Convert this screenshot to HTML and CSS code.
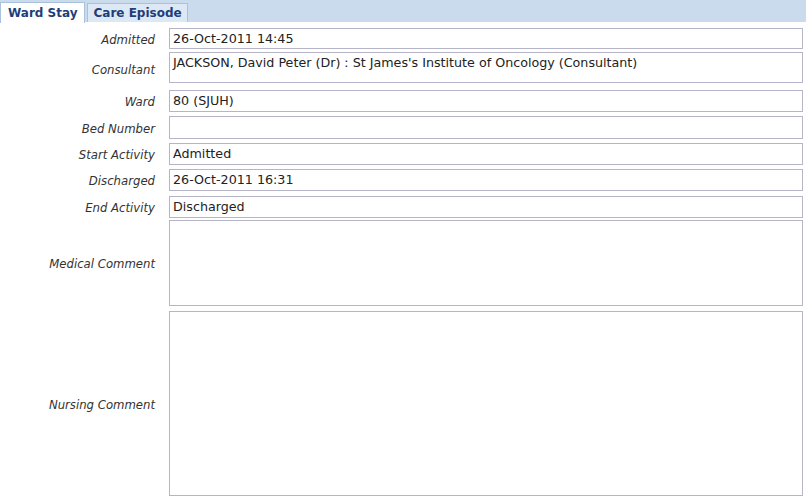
FILE: index.html
```html
<!DOCTYPE html>
<html>
<head>
<meta charset="utf-8">
<link rel="stylesheet" href="styles.css">
</head>
<body>
<div class="tabbar">
  <div class="tab active">Ward Stay</div>
  <div class="tab">Care Episode</div>
</div>
<div class="form">
  <div class="row r-admitted"><div class="label">Admitted</div><div class="field">26-Oct-2011 14:45</div></div>
  <div class="row r-consultant"><div class="label">Consultant</div><div class="field tall">JACKSON, David Peter (Dr) : St James's Institute of Oncology (Consultant)</div></div>
  <div class="row r-ward"><div class="label">Ward</div><div class="field">80 (SJUH)</div></div>
  <div class="row r-bed"><div class="label">Bed Number</div><div class="field"></div></div>
  <div class="row r-start"><div class="label">Start Activity</div><div class="field">Admitted</div></div>
  <div class="row r-dis"><div class="label">Discharged</div><div class="field">26-Oct-2011 16:31</div></div>
  <div class="row r-end"><div class="label">End Activity</div><div class="field">Discharged</div></div>
  <div class="row r-med"><div class="label">Medical Comment</div><div class="field area"></div></div>
  <div class="row r-nurse"><div class="label">Nursing Comment</div><div class="field area"></div></div>
</div>
</body>
</html>
```

FILE: styles.css
```css
html, body {
  margin: 0;
  padding: 0;
  background: #ffffff;
  font-family: "DejaVu Sans", Verdana, sans-serif;
}
.tabbar {
  height: 22px;
  background: #c9dbec;
  display: flex;
  align-items: flex-end;
  gap: 2px;
}
.tab {
  height: 19px;
  box-sizing: border-box;
  border: 1px solid #a8c2dc;
  border-bottom: none;
  background: #dce9f5;
  color: #1f3d7a;
  font-weight: bold;
  font-size: 12px;
  line-height: 19px;
  padding: 0 5px 0 6px;
  white-space: nowrap;
}
.tab.active {
  background: #ffffff;
  height: 21px;
  line-height: 21px;
  padding: 0 6px 0 7px;
  margin-bottom: -1px;
  min-width: 84px;
  box-sizing: border-box;
}
.form {
  display: flex;
  flex-direction: column;
  padding: 0 3px 0 0;
}
.row {
  display: grid;
  grid-template-columns: 169px 1fr;
  align-items: center;
}
.label {
  font-style: italic;
  font-size: 11.7px;
  color: #333333;
  text-align: right;
  padding-right: 14px;
  padding-top: 2px;
  line-height: 16px;
}
.field {
  box-sizing: border-box;
  height: 22px;
  border: 1px solid #b6b5c8;
  font-size: 12.7px;
  color: #222222;
  padding: 0 3px;
  line-height: 20px;
  white-space: nowrap;
  overflow: hidden;
}
.field.tall { height: 31px; line-height: 18px; padding-top: 1px; }
.r-admitted { margin-top: 6px; }
.r-admitted .field { height: 21px; line-height: 20px; }
.r-consultant { margin-top: 3px; }
.r-consultant .label { padding-top: 4px; }
.r-ward { margin-top: 7px; }
.r-bed { margin-top: 4px; }
.r-bed .field { height: 23px; }
.r-start { margin-top: 4px; }
.r-dis { margin-top: 4px; }
.r-end { margin-top: 5px; }
.r-med { margin-top: 2px; }
.r-med .field { height: 86px; }
.r-nurse { margin-top: 5px; }
.r-nurse .field { height: 185px; }
```
